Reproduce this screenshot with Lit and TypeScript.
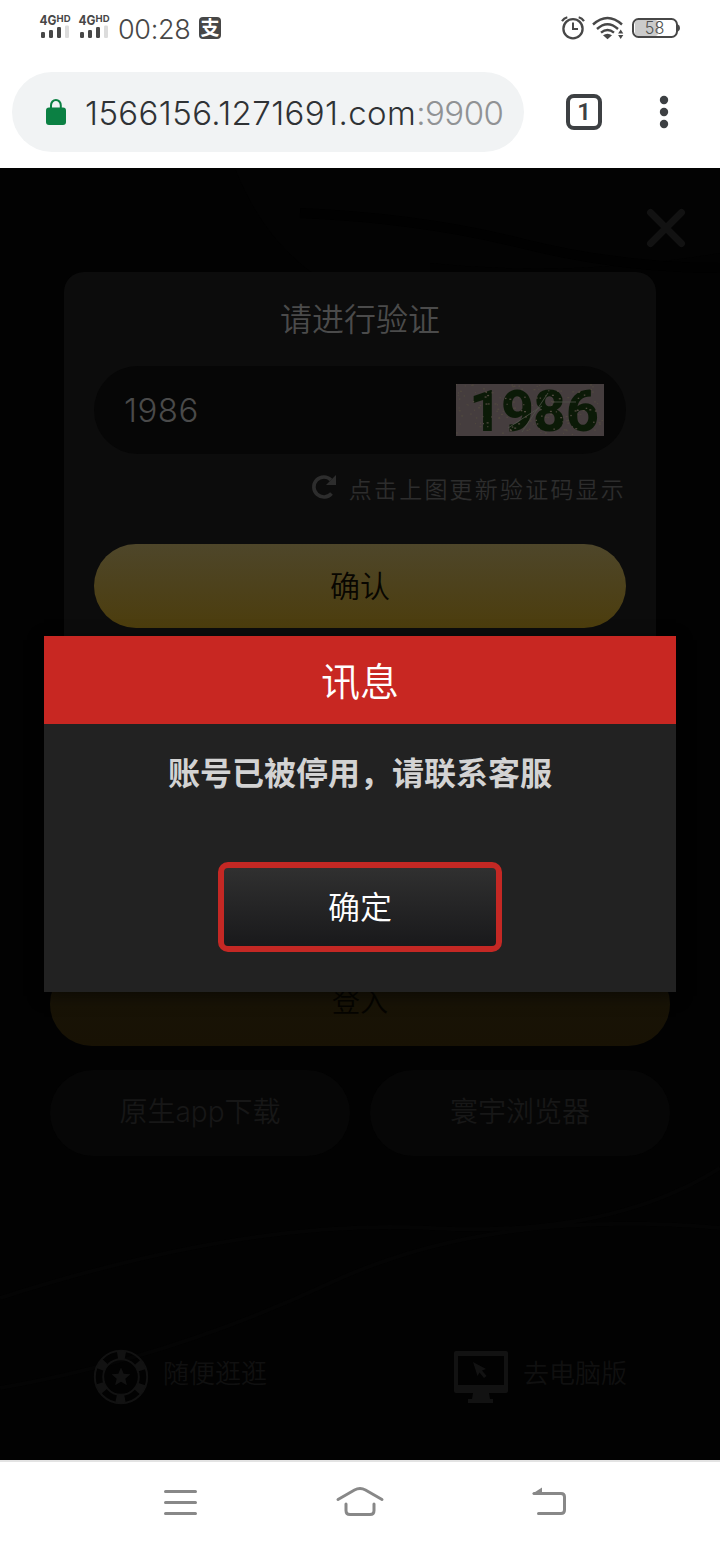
import { LitElement, html, css, svg } from "lit";
import { customElement } from "lit/decorators.js";

const speckles = Array.from({ length: 150 }, (_, i) => ({
  x: (i * 61.7 + ((i * i) % 17) * 3.1) % 146,
  y: (i * 23.3 + ((i * i) % 11) * 2.7) % 50,
  w: 1 + (i % 3) * 0.5,
}));

@customElement("status-bar")
class StatusBar extends LitElement {
  static styles = css`
    :host { display: flex; height: 56px; justify-content: space-between; padding: 0 39px 0 39px; box-sizing: border-box; color: #474747; font-family: Inter, Roboto, sans-serif; }
    .left, .right { display: flex; align-items: flex-start; }
    .sim { width: 32px; height: 26px; margin: 14px 7px 0 0; overflow: visible; }
    .time { font-size: 27px; font-weight: 350; line-height: 32px; letter-spacing: -0.35px; margin: 14px 0 0 1px; width: 81px; }
    .pay { width: 22px; height: 22px; margin-top: 17px; overflow: visible; }
    .clock { width: 24px; height: 26px; margin: 15px 7px 0 -1px; }
    .wifi { width: 32px; height: 26px; margin: 15px 8px 0 0; }
    .battery { width: 49px; height: 22px; margin-top: 17px; overflow: visible; }
    .bold { font-family: Inter, sans-serif; font-weight: 700; fill: #474747; }
    .han { font-family: "Noto Sans CJK SC", sans-serif; font-weight: 700; fill: #fff; }
    .num { font-family: Inter, sans-serif; font-weight: 350; fill: #505050; }
  `;
  sim() {
    return html`<svg class="sim" viewBox="0 0 32 26">
      <text class="bold" x="0.5" y="11" font-size="13" textLength="17" lengthAdjust="spacingAndGlyphs">4G</text>
      <text class="bold" x="17.6" y="8" font-size="9.500" textLength="14" lengthAdjust="spacingAndGlyphs">HD</text>
      <g fill="#474747"><rect x="2" y="18" width="4" height="6" rx="1.2" /><rect x="10" y="16" width="4" height="8" rx="1.2" /><rect x="18" y="13" width="4" height="11" rx="1.2" /></g>
      <rect x="26" y="11.500" width="4" height="12.500" rx="1.200" fill="#dcdcdc" />
    </svg>`;
  }
  render() {
    return html`
      <div class="left">
        ${this.sim()}${this.sim()}
        <span class="time">00:28</span>
        <svg class="pay" viewBox="0 0 22 22"><rect width="22" height="22" rx="4" fill="#474747" /><text class="han" x="1.500" y="17.500" font-size="19">支</text></svg>
      </div>
      <div class="right">
        <svg class="clock" viewBox="0 0 24 26" fill="none" stroke="#474747">
          <circle cx="12" cy="13.700" r="9.600" stroke-width="2.300" />
          <path d="M12 7.500v6.500h5" stroke-width="2" />
          <path d="M1 6.200Q3 3 6.300 2.200M23 6.200Q21 3 17.700 2.200" stroke-width="2.200" />
        </svg>
        <svg class="wifi" viewBox="0 0 32 26" fill="none" stroke="#474747" stroke-width="2.400">
          <path d="M1 9.500Q15.500-3.500 30 9.500M5 14Q15.500 4.500 26 14M9 17.700Q15.500 12.300 22 17.700" />
          <path d="M11 20.300Q15.500 17 20 20.300L15.500 24.300Z" fill="#474747" stroke="none" />
          <path d="M28.700 14.500l2.600 4h-5.200zM28.700 24l2.600-4h-5.200z" fill="#474747" stroke="none" />
        </svg>
        <svg class="battery" viewBox="0 0 49 22">
          <rect x="3" y="3" width="23" height="16" rx="3" fill="#cbcbcb" />
          <rect x="1" y="2" width="44" height="18" rx="5.500" fill="none" stroke="#474747" stroke-width="2" />
          <path d="M46 7.500q2 .5 2 3.500t-2 3.500z" fill="#474747" />
          <text class="num" x="12.800" y="17" font-size="17" textLength="19.500" lengthAdjust="spacingAndGlyphs">58</text>
        </svg>
      </div>`;
  }
}

@customElement("address-bar")
class AddressBar extends LitElement {
  static styles = css`
    :host { display: flex; height: 112px; padding: 16px 12px 16px; box-sizing: border-box; font-family: Inter, Roboto, sans-serif; }
    .pill { display: flex; align-items: center; width: 512px; height: 80px; border-radius: 40px; background: #f1f3f4; box-sizing: border-box; padding-left: 33px; }
    .lock { width: 22px; height: 28px; }
    .url { margin: 2px 0 0 18px; font-size: 33px; font-weight: 330; line-height: 44px; color: #2f3235; white-space: nowrap; letter-spacing: 0.400px; }
    .port { color: #909294; letter-spacing: -0.500px; }
    .tabs { width: 28px; height: 28px; border: 4px solid #3d4043; border-radius: 8px; margin: 22px 0 0 42px; display: flex; align-items: center; justify-content: center; font-family: Roboto, sans-serif; font-size: 24px; line-height: 28px; font-weight: 600; color: #3d4043; }
    .more { width: 10px; height: 34px; margin: 23px 0 0 57px; }
  `;
  render() {
    return html`
      <div class="pill">
        <svg class="lock" viewBox="0 0 22 28"><path d="M6 11V7.500a4.800 5.500 0 0 1 9.800 0V11" fill="none" stroke="#0b8043" stroke-width="2" /><rect x="1" y="9.500" width="20" height="17.500" rx="3" fill="#0b8043" /></svg>
        <span class="url">1566156.1271691.com<span class="port">:9900</span></span>
      </div>
      <div class="tabs">1</div>
      <svg class="more" viewBox="0 0 10 34" fill="#3d4043"><circle cx="5" cy="5" r="4.200" /><circle cx="5" cy="17" r="4.200" /><circle cx="5" cy="29" r="4.200" /></svg>`;
  }
}

@customElement("login-page")
class LoginPage extends LitElement {
  static styles = css`
    :host { display: flex; flex-direction: column; height: 1292px; box-sizing: border-box; padding: 794px 50px 0; background: #020202; position: relative; font-family: Inter, Roboto, "Noto Sans CJK SC", sans-serif; font-weight: 350; }
    .waves { position: absolute; inset: 0; width: 720px; height: 1292px; }
    .login { position: relative; height: 84px; border-radius: 42px; background: linear-gradient(#181408, #181204); color: #050401; font-size: 28px; line-height: 80px; text-align: center; }
    .pair { position: relative; display: grid; grid-template-columns: 300px 300px; gap: 20px; margin-top: 24px; }
    .alt { height: 86px; border-radius: 43px; background: #060606; color: #171717; font-size: 28px; line-height: 84px; text-align: center; }
    .foot { position: relative; display: grid; grid-template-columns: 360px 1fr; margin: 193px 0 0 43px; color: #101010; font-size: 26px; }
    .link { display: flex; align-items: flex-start; gap: 14px; line-height: 50px; }
    .ico { width: 56px; height: 56px; }
  `;
  render() {
    return html`
      <svg class="waves" viewBox="0 0 720 1292" fill="none">
        <path d="M235 0Q285 130 430 150V95Q570 110 720 85V0Z" fill="#030303" />
        <path d="M300 45Q420 50 520 75T720 100" stroke="#010101" stroke-width="10" />
        <path d="M0 1130Q250 1050 430 1060T720 1000M0 1220Q170 1190 330 1115T720 1060" stroke="#040404" stroke-width="4" />
      </svg>
      <div class="login">登入</div>
      <div class="pair"><div class="alt">原生app下载</div><div class="alt">寰宇浏览器</div></div>
      <div class="foot">
        <div class="link">
          <svg class="ico" viewBox="0 0 56 56" fill="none" stroke="#121212">
            <circle cx="28" cy="28" r="26.200" stroke-width="2" /><circle cx="28" cy="28" r="17.800" stroke-width="2" />
            <circle cx="28" cy="28" r="22" stroke-width="8.500" stroke-dasharray="9 14.038" stroke-dashoffset="4.500" transform="rotate(-90 28 28)" />
            <path fill="#121212" stroke="none" d="M28 18.500l2.700 6.200 6.700.600-5.100 4.400 1.600 6.600-5.900-3.500-5.900 3.500 1.600-6.600-5.100-4.400 6.700-.600z" />
          </svg><span>随便逛逛</span>
        </div>
        <div class="link">
          <svg class="ico" viewBox="0 0 56 56" fill="#121212">
            <path fill-rule="evenodd" d="M3 2H53a2 2 0 0 1 2 2V42a2 2 0 0 1-2 2H3a2 2 0 0 1-2-2V4a2 2 0 0 1 2-2ZM5 7V36H51V7Z" />
            <path d="M20 44H36L37 50H40V54H15V50H19ZM20 13L33 20 29 21.500 33.500 27 31 29 26.500 23.500 24.500 27Z" />
          </svg><span>去电脑版</span>
        </div>
      </div>`;
  }
}

@customElement("verify-card")
class VerifyCard extends LitElement {
  static styles = css`
    :host { display: flex; flex-direction: column; box-sizing: border-box; width: 592px; height: 500px; padding: 29px 30px 0; border-radius: 20px; background: #0c0c0c; font-family: Inter, Roboto, "Noto Sans CJK SC", sans-serif; font-weight: 350; }
    .title { font-size: 32px; line-height: 38px; text-align: center; color: #4b4b4b; }
    .field { display: flex; justify-content: space-between; align-items: center; height: 88px; margin-top: 27px; padding: 0 22px 0 30px; border-radius: 44px; background: #060606; }
    .code { font-size: 33px; line-height: 40px; margin-bottom: 1px; color: #4a4a4a; letter-spacing: 0.500px; }
    .captcha { width: 148px; height: 52px; overflow: visible; }
    .glyphs { font-family: Roboto, sans-serif; font-weight: 800; font-size: 57px; fill: #0b1a07; }
    .hint { display: flex; justify-content: flex-end; gap: 12px; margin-top: 18px; color: #2d2d2d; font-size: 23px; line-height: 36px; letter-spacing: 2.200px; white-space: nowrap; }
    .reload { width: 26px; height: 26px; margin-top: 2px; }
    .go { height: 84px; margin-top: 36px; border-radius: 42px; background: linear-gradient(#4e462a, #4c3d0d); color: #080601; font-size: 30px; line-height: 84px; text-align: center; }
  `;
  render() {
    return html`
      <div class="title">请进行验证</div>
      <div class="field">
        <span class="code">1986</span>
        <svg class="captcha" viewBox="0 0 148 52">
          <rect width="148" height="52" fill="#453d3e" />
          <text class="glyphs" x="13 45 77 110" y="46.500">1986</text>
          <path d="M66 48L92 9M52 44l34-22M96 18h24" stroke="#51544a" stroke-width="0.800" />
          ${speckles.map((s) => svg`<rect x=${s.x} y=${s.y} width=${s.w} height="1.300" fill="#50493f" />`)}
        </svg>
      </div>
      <div class="hint">
        <svg class="reload" viewBox="0 0 26 26"><path d="M20.500 19.500A10 10 0 1 1 20 6" fill="none" stroke="#2d2d2d" stroke-width="3.600" /><path d="M25 1V11H15Z" fill="#2d2d2d" /></svg>
        <span>点击上图更新验证码显示</span>
      </div>
      <div class="go">确认</div>`;
  }
}

@customElement("message-dialog")
class MessageDialog extends LitElement {
  static styles = css`
    :host { display: flex; flex-direction: column; align-items: center; width: 632px; height: 356px; background: #222; box-shadow: 0 4px 14px rgba(0, 0, 0, 0.5); font-family: "Noto Sans CJK SC", sans-serif; }
    .head { align-self: stretch; height: 88px; background: #c82722; color: #fff; font-size: 39px; font-weight: 350; line-height: 86px; text-align: center; }
    .body { margin-top: 23px; font-size: 32px; font-weight: 700; line-height: 48px; color: #d3d3d3; }
    .ok { width: 272px; height: 78px; margin-top: 67px; border: 6px solid #c42824; border-radius: 10px; background: linear-gradient(#303030, #19191b); color: #fff; font-size: 32px; font-weight: 350; line-height: 75px; text-align: center; }
  `;
  render() {
    return html`<div class="head">讯息</div><div class="body">账号已被停用，请联系客服</div><div class="ok">确定</div>`;
  }
}

@customElement("system-nav")
class SystemNav extends LitElement {
  static styles = css`
    :host { display: flex; height: 84px; box-sizing: border-box; border-top: 2px solid #e3e3e3; background: #fff; align-items: flex-start; justify-content: space-between; padding: 22px 153px 0 162px; }
    .ico { width: 37px; height: 34px; }
    .home { width: 50px; height: 34px; margin-right: 9px; }
  `;
  render() {
    return html`
      <svg class="ico" viewBox="0 0 37 34" fill="none" stroke="#888" stroke-width="3" stroke-linecap="round"><path d="M3.500 7.500h30M3.500 18.500h30M3.500 29.500h30" /></svg>
      <svg class="home" viewBox="0 0 50 34" fill="none" stroke="#888" stroke-width="3" stroke-linecap="round"><path d="M3 15.500L19.500 6Q25 3 30.500 6L47 15.500M11 20V26.500Q11 30.500 15 30.500H35Q39 30.500 39 26.500V20" /></svg>
      <svg class="ico" viewBox="0 0 37 34" fill="none" stroke="#888" stroke-width="3" stroke-linecap="round"><path d="M4 9.500H31Q34.500 9.500 34.500 13V26Q34.500 29.500 31 29.500H8.500" /><path d="M2 10L12 3.500V10Z" fill="#888" stroke="none" /></svg>`;
  }
}

@customElement("app-root")
class AppRoot extends LitElement {
  static styles = css`
    :host { display: block; width: 720px; height: 1544px; background: #fff; overflow: hidden; }
    .stage { position: relative; height: 1292px; overflow: hidden; }
    .verify { position: absolute; left: 64px; top: 104px; }
    .dialog { position: absolute; left: 44px; top: 468px; }
    .close { position: absolute; right: 34px; top: 40px; width: 40px; height: 40px; }
  `;
  render() {
    return html`
      <status-bar></status-bar>
      <address-bar></address-bar>
      <div class="stage">
        <login-page></login-page>
        <svg class="close" viewBox="0 0 40 40"><path d="M4.500 4.500L35.500 35.500M35.500 4.500L4.500 35.500" stroke="#121212" stroke-width="7" stroke-linecap="round" /></svg>
        <verify-card class="verify"></verify-card>
        <message-dialog class="dialog"></message-dialog>
      </div>
      <system-nav></system-nav>`;
  }
}
